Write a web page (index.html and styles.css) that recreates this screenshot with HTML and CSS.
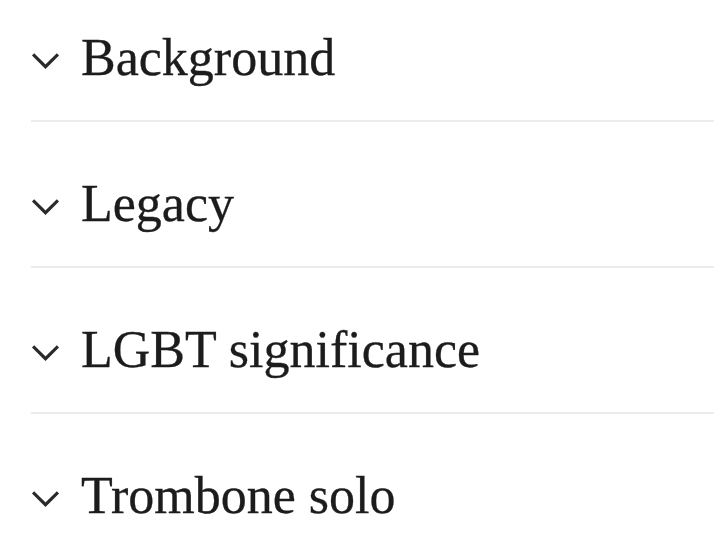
FILE: index.html
```html
<!DOCTYPE html>
<html lang="en">
<head>
  <meta charset="UTF-8" />
  <meta name="viewport" content="width=device-width, initial-scale=1.0" />
  <title>Sections</title>
  <link rel="stylesheet" href="styles.css">
</head>
<body>
  <div class="sections">
    <div class="section">
      <svg class="chevron" viewBox="0 0 28 16"><path d="M2 2 L14 14 L26 2" /></svg>
      <h2>Background</h2>
    </div>
    <div class="section">
      <svg class="chevron" viewBox="0 0 28 16"><path d="M2 2 L14 14 L26 2" /></svg>
      <h2>Legacy</h2>
    </div>
    <div class="section">
      <svg class="chevron" viewBox="0 0 28 16"><path d="M2 2 L14 14 L26 2" /></svg>
      <h2>LGBT significance</h2>
    </div>
    <div class="section">
      <svg class="chevron" viewBox="0 0 28 16"><path d="M2 2 L14 14 L26 2" /></svg>
      <h2>Trombone solo</h2>
    </div>
  </div>
</body>
</html>
```

FILE: styles.css
```css
body {
  margin: 0;
  background: #fff;
  font-family: "Liberation Serif", "DejaVu Serif", serif;
  color: #1c1c1c;
}
.sections {
  padding-left: 31px;
  padding-right: 6px;
}
.section {
  display: flex;
  align-items: center;
  gap: 21px;
  padding: 51px 0 31px 0;
  border-bottom: 2px solid #ececec;
}
.section:first-child {
  padding-top: 27px;
}
.section:last-child {
  border-bottom: none;
}
.chevron {
  width: 29px;
  height: 17px;
  margin-top: 4px;
  flex: none;
}
.chevron path {
  fill: none;
  stroke: #2a2a2a;
  stroke-width: 3;
}
h2 {
  margin: 0;
  font-size: 52px;
  line-height: 62px;
  font-weight: normal;
  -webkit-text-stroke: 0.3px #1c1c1c;
}
```
